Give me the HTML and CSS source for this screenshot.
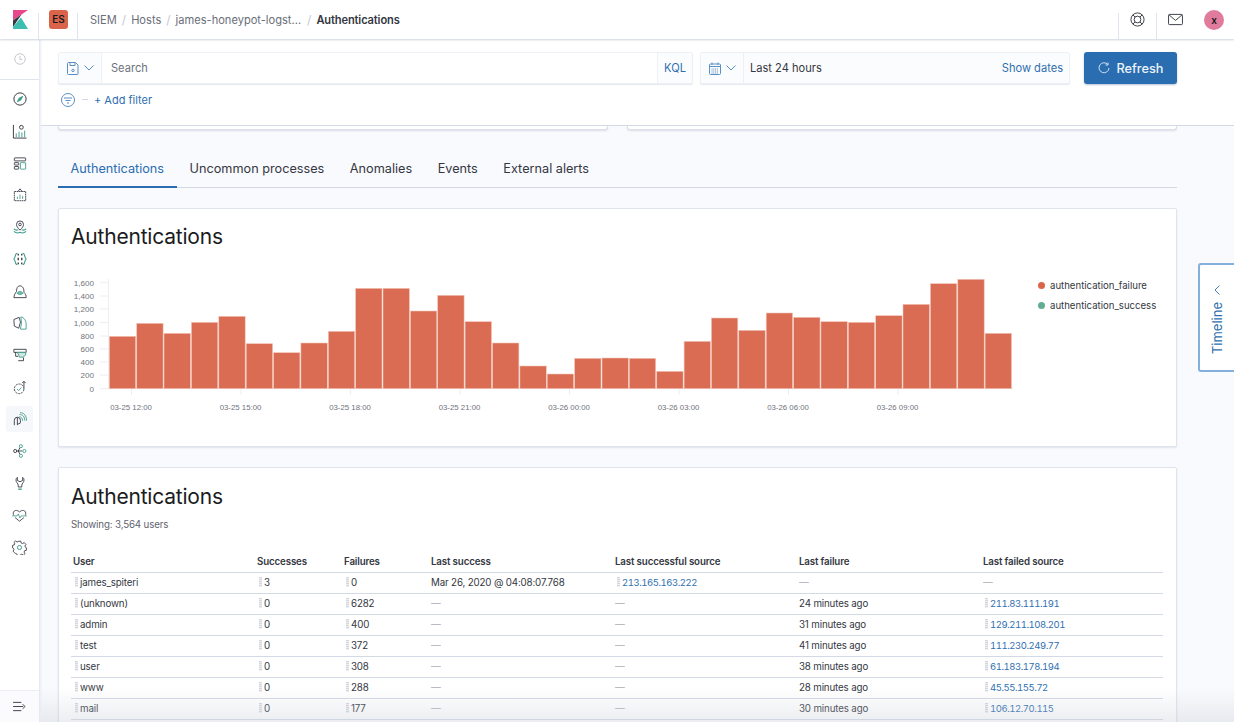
FILE: index.html
```html
<!DOCTYPE html>
<html lang="en">
<head>
<meta charset="utf-8">
<title>Authentications</title>
<link rel="stylesheet" href="styles.css">
</head>
<body>
<header class="topbar">
  <div class="logo-cell">
    <svg width="15" height="19" viewBox="0 0 15 19"><polygon points="0,0 15,0 0,10.500" fill="#e8488b"/><polygon points="0,10.500 8.500,4.500 0,17" fill="#343741"/><polygon points="0,19 15,19 8,7.500 0,17" fill="#3ebeb0"/></svg>
  </div>
  <div class="space-cell"><span class="space-badge">ES</span></div>
  <nav class="crumbs">
    <span class="crumb">SIEM</span><span class="slash">/</span>
    <span class="crumb">Hosts</span><span class="slash">/</span>
    <span class="crumb">james-honeypot-logst...</span><span class="slash slash-wide">/</span>
    <span class="crumb crumb-active">Authentications</span>
  </nav>
  <div class="top-icons">
    <div class="top-icon">
      <svg width="15" height="15" viewBox="0 0 16 16" fill="none" stroke="#343741"><circle cx="8" cy="8" r="7"/><circle cx="8" cy="8" r="3.600"/><path d="M3 3 5.400 5.400M13 3 10.600 5.400M3 13 5.400 10.600M13 13 10.600 10.600"/></svg>
    </div>
    <div class="top-icon">
      <svg width="15" height="13" viewBox="0 0 16 14" fill="none" stroke="#343741"><rect x=".5" y="1.500" width="15" height="11" rx="1"/><path d="M1 2 8 8l7-6"/></svg>
    </div>
    <div class="top-avatar"><span class="avatar">x</span></div>
  </div>
</header>

<div class="shell">
  <aside class="sidenav">
    <div class="nav-recent">
      <svg width="12" height="12" viewBox="0 0 16 16" fill="none" stroke="#c2c6cf" stroke-width="1.300"><circle cx="8" cy="8" r="7"/><path d="M8 4v4.500h3"/></svg>
    </div>
    <div class="nav-list">
      <a class="nav-item"><svg width="14" height="14" viewBox="0 0 16 16" fill="none" stroke="#343741" stroke-width="1.100"><circle cx="8" cy="8" r="7"/><path d="M11 5 9 9 5 11 7 7Z" fill="#3f9b8a" stroke="#3f9b8a"/></svg></a>
      <a class="nav-item"><svg width="15" height="15" viewBox="0 0 16 16" fill="none" stroke="#343741"><path d="M1.500 1v14h14"/><path d="M4.500 14v-4M7.500 14V8M10.500 14V9M13.500 14V7" stroke="#3f9b8a"/><circle cx="10" cy="3.500" r="2"/></svg></a>
      <a class="nav-item"><svg width="14" height="13" viewBox="0 0 16 15" fill="none" stroke="#343741"><rect x="1.500" y="1" width="13" height="3.500" rx=".5"/><rect x="1.500" y="6.500" width="5" height="2.800" rx=".5"/><rect x="1.500" y="11" width="5" height="3" rx=".5"/><rect x="8.500" y="6.500" width="6" height="7.500" rx=".5" stroke="#3f9b8a"/></svg></a>
      <a class="nav-item"><svg width="14" height="14" viewBox="0 0 16 16" fill="none" stroke="#343741"><rect x="1.500" y="4" width="13" height="10.500" stroke-dasharray="2 .6"/><path d="M8 1 5.500 4M8 1l2.500 3"/><path d="M5 12.500V10M8 12.500V7.500M11 12.500V9" stroke="#3f9b8a"/></svg></a>
      <a class="nav-item"><svg width="14" height="15" viewBox="0 0 16 17" fill="none" stroke="#343741"><path d="M8 11.500C5.500 9 4 7.200 4 5a4 4 0 0 1 8 0c0 2.200-1.500 4-4 6.500Z"/><circle cx="8" cy="5" r="1.500"/><path d="M1 10c1.500 1.600 3.300 1.800 5 1M15 10c-1.500 1.600-3.300 1.800-5 1M1 13c2.500 2 5 2 7 1 2 1 4.500 1 7-1" stroke="#3f9b8a" stroke-width="1.200"/></svg></a>
      <a class="nav-item"><svg width="14" height="14" viewBox="0 0 16 16" fill="none" stroke="#343741"><path d="M5 1.500C2.500 1.500 2.800 5 2 6.500.8 7.500.8 8.500 2 9.500c.8 1.500.5 5 3 5M11 1.500c2.500 0 2.200 3.500 3 5 1.200 1 1.200 2 0 3-.8 1.500-.5 5-3 5" stroke="#3f9b8a" stroke-width="1.200"/><path d="M6 2v2M10 2v2M6 6.500v3M10 6.500v3M6 12v2M10 12v2" stroke-width="1.500"/></svg></a>
      <a class="nav-item"><svg width="14" height="15" viewBox="0 0 16 16" fill="none" stroke="#343741"><path d="M1 15h14c.2-2.500-.8-4.500-2.500-6 .3-4-1.500-7.500-4.500-7.500S4 4.500 4 8C2.200 10 1.300 12.500 1 15Z"/><path d="M4.500 10c2.300-2.800 4.700-2.800 7 0-2.300 1.800-4.700 1.800-7 0Z" fill="#7cc0b0" stroke="#3f9b8a"/></svg></a>
      <a class="nav-item"><svg width="14" height="14" viewBox="0 0 16 16" fill="none" stroke="#343741"><path d="M1 4 7 1.500 8.500 7 6.500 14 1.500 11.500Z"/><path d="M9 1c3.500.5 6 4 6 8v6H8.500l1.200-7Z" stroke="#3f9b8a"/></svg></a>
      <a class="nav-item"><svg width="14" height="14" viewBox="0 0 16 16" fill="none" stroke="#343741"><path d="M1 1.500h14v3.500H1z"/><path d="M3 5v4.500h3"/><path d="M5 5h9.500v3l-3 2.500h-4Z" stroke="#3f9b8a" fill="#cfe6e0"/><path d="M12 11v3.500H6"/></svg></a>
      <a class="nav-item"><svg width="14" height="15" viewBox="0 0 16 16" fill="none" stroke="#343741"><circle cx="7" cy="9.500" r="5.500" stroke-dasharray="2.500 1"/><path d="M4.800 9.800 6.500 11.500 9.500 8" stroke="#3f9b8a"/><path d="M12.500 8V1M10.500 3l2-2 2 2"/></svg></a>
      <a class="nav-item nav-active"><svg width="14" height="14" viewBox="0 0 16 16" fill="none" stroke="#343741"><path d="M1.500 15V9.500a3.500 3.500 0 0 1 7 0v2a2 2 0 0 1-2 2H5"/><path d="M5 6v9"/><path d="M7 5.500c2-.3 4 1.500 4 4.500M7.500 3c3.500-.3 6 2.500 6 7M8 .8c4.500-.2 7.500 3.500 7.500 9" stroke="#3f9b8a"/></svg></a>
      <a class="nav-item"><svg width="14" height="14" viewBox="0 0 16 16" fill="none" stroke="#343741"><path d="M3.500 8h7M6 8 8 4M6 8l2 4"/><circle cx="2.500" cy="8" r="1.800"/><circle cx="9" cy="2.500" r="1.800" stroke="#3f9b8a"/><circle cx="13" cy="8" r="1.800" stroke="#3f9b8a"/><circle cx="9" cy="13.500" r="1.800" stroke="#3f9b8a"/></svg></a>
      <a class="nav-item"><svg width="14" height="15" viewBox="0 0 16 16" fill="none" stroke="#343741"><path d="M5 1C3 2 3 5.500 4.500 7c1 1 1.500 2 1.500 3.500V12h4v-1.500C10 9 10.500 8 11.500 7 13 5.500 13 2 11 1v3.500L8 6 5 4.500Z"/><path d="M6 14.500h4" stroke="#3f9b8a" stroke-width="1.500"/></svg></a>
      <a class="nav-item"><svg width="15" height="13" viewBox="0 0 18 16" fill="none" stroke="#343741"><path d="M2 8C-.5 4 3.500-1 9 3.500 14.500-1 18.500 4 16 8M3.500 10.500 9 15l5.500-4.500"/><path d="M0 8.500h6L7.500 6 9.500 11 11 8.500h7" stroke="#3f9b8a"/></svg></a>
      <a class="nav-item"><svg width="15" height="15" viewBox="0 0 16 16" fill="none" stroke="#343741"><path d="M6.500 1h3l.5 2 1.600.7L13.500 2.500l2 2.200-1.200 1.800.7 1.500 1 .5v3l-2 .5-.7 1.600 1.200 1.700-2 1.900-1.900-1.200-1.500.7-.4 1.300h-3l-.5-2-1.500-.7L2.500 14.500.5 12.500 1.700 10.700 1 9.200 0 8.700v-3l2-.5.700-1.500L1.500 2.500 3.500.7l1.800 1.200L6.200 1.500Z" transform="translate(.6 .4) scale(.92)"/><circle cx="8" cy="8" r="2.200" stroke="#3f9b8a"/></svg></a>
    </div>
    <div class="nav-foot">
      <svg width="13" height="11" viewBox="0 0 14 12" fill="none" stroke="#343741"><path d="M0 1.500h9M0 6h11M0 10.500h9M10.500 3.500 13 6l-2.500 2.500"/></svg>
    </div>
  </aside>

  <main class="main">
    <section class="querybar">
      <div class="query-row">
        <div class="search-group">
          <div class="addon addon-save">
            <svg width="12" height="13" viewBox="0 0 12 13" fill="none" stroke="#5a8fc4"><path d="M.5 1.500a1 1 0 0 1 1-1h7l2.500 2.500v8.500a1 1 0 0 1-1 1h-8.500a1 1 0 0 1-1-1Z"/><path d="M3 .5v3h5v-3"/><circle cx="6" cy="8.500" r="1.200"/></svg>
            <svg class="chev" width="10" height="6" viewBox="0 0 10 6" fill="none" stroke="#5a8fc4"><path d="m.5.500 4.500 4.500 4.500-4.500"/></svg>
          </div>
          <div class="search-input">Search</div>
          <div class="addon addon-kql">KQL</div>
        </div>
        <div class="date-group">
          <div class="addon addon-cal">
            <svg width="12" height="13" viewBox="0 0 12 13" fill="none" stroke="#5a8fc4"><rect x=".5" y="2" width="11" height="10.500" rx="1"/><path d="M.5 4.500h11M3 .5v2.500M9 .5v2.500"/><path d="M2.500 7h7M2.500 9h7M2.500 11h7" stroke-dasharray="1 .8"/></svg>
            <svg class="chev" width="10" height="6" viewBox="0 0 10 6" fill="none" stroke="#5a8fc4"><path d="m.5.500 4.500 4.500 4.500-4.500"/></svg>
          </div>
          <div class="date-text"><span>Last 24 hours</span><a class="show-dates">Show dates</a></div>
        </div>
        <button class="refresh">
          <svg width="12" height="12" viewBox="0 0 12 12" fill="none" stroke="#cfe0f0"><path d="M9.800 2.500A5 5 0 1 0 11 6"/><path d="M10 .5v2.500H7.500"/></svg>
          Refresh
        </button>
      </div>
      <div class="filter-row">
        <svg width="14" height="14" viewBox="0 0 14 14" fill="none" stroke="#5a8fc4"><circle cx="7" cy="7" r="6.500"/><path d="M3 5h8M4.500 7.500h5M6 10h2"/></svg>
        <span class="filter-dash"></span>
        <a class="add-filter">+ Add filter</a>
      </div>
    </section>

    <div class="content">
      <div class="stub-row"><div class="stub"></div><div class="stub"></div></div>

      <div class="tabs">
        <a class="tab tab-active">Authentications</a>
        <a class="tab">Uncommon processes</a>
        <a class="tab">Anomalies</a>
        <a class="tab">Events</a>
        <a class="tab">External alerts</a>
      </div>

      <section class="panel panel-chart">
        <h2 class="panel-title">Authentications</h2>
        <div class="chart-row">
          <svg class="chart" width="950" height="150" viewBox="71 270 950 150">
            <path class="axis" d="M108.500 279V389M100 282.700h8M100 296h8M100 309h8M100 322.500h8M100 336h8M100 349h8M100 362h8M100 375h8M100 388.700h913M131.500 389v6M241 389v6M350.500 389v6M460 389v6M569.500 389v6M679 389v6M788.500 389v6M898 389v6"/>
            <g class="ylabels">
              <text x="94" y="285.700">1,600</text><text x="94" y="299">1,400</text><text x="94" y="312">1,200</text><text x="94" y="325.500">1,000</text><text x="94" y="339">800</text><text x="94" y="352">600</text><text x="94" y="365">400</text><text x="94" y="378">200</text><text x="94" y="391.500">0</text>
            </g>
            <g class="bars">
              <rect x="109.300" y="336.300" width="26.400" height="52.400"/>
              <rect x="136.700" y="323.300" width="26.400" height="65.400"/>
              <rect x="164" y="333.300" width="26.400" height="55.400"/>
              <rect x="191.400" y="322.300" width="26.400" height="66.400"/>
              <rect x="218.800" y="316.300" width="26.400" height="72.400"/>
              <rect x="246.200" y="343.700" width="26.400" height="45"/>
              <rect x="273.500" y="352.700" width="26.400" height="36"/>
              <rect x="300.900" y="343" width="26.400" height="45.700"/>
              <rect x="328.300" y="331.300" width="26.400" height="57.400"/>
              <rect x="355.600" y="288.300" width="26.400" height="100.400"/>
              <rect x="383" y="288.300" width="26.400" height="100.400"/>
              <rect x="410.400" y="311" width="26.400" height="77.700"/>
              <rect x="437.700" y="295.300" width="26.400" height="93.400"/>
              <rect x="465.100" y="321.700" width="26.400" height="67"/>
              <rect x="492.500" y="343" width="26.400" height="45.700"/>
              <rect x="519.900" y="366" width="26.400" height="22.700"/>
              <rect x="547.200" y="374" width="26.400" height="14.700"/>
              <rect x="574.600" y="358.300" width="26.400" height="30.400"/>
              <rect x="602" y="358" width="26.400" height="30.700"/>
              <rect x="629.300" y="358.300" width="26.400" height="30.400"/>
              <rect x="656.700" y="371.300" width="26.400" height="17.400"/>
              <rect x="684.100" y="341.300" width="26.400" height="47.400"/>
              <rect x="711.400" y="318" width="26.400" height="70.700"/>
              <rect x="738.800" y="330.300" width="26.400" height="58.400"/>
              <rect x="766.200" y="313" width="26.400" height="75.700"/>
              <rect x="793.600" y="317.300" width="26.400" height="71.400"/>
              <rect x="820.900" y="321.700" width="26.400" height="67"/>
              <rect x="848.300" y="322.300" width="26.400" height="66.400"/>
              <rect x="875.700" y="315.700" width="26.400" height="73"/>
              <rect x="903" y="304.300" width="26.400" height="84.400"/>
              <rect x="930.400" y="283.700" width="26.400" height="105"/>
              <rect x="957.800" y="279.300" width="26.400" height="109.400"/>
              <rect x="985.100" y="333.300" width="26.400" height="55.400"/>
            </g>
            <g class="xlabels">
              <text x="131" y="410">03-25 12:00</text><text x="240.500" y="410">03-25 15:00</text><text x="350" y="410">03-25 18:00</text><text x="459.500" y="410">03-25 21:00</text><text x="569" y="410">03-26 00:00</text><text x="678.500" y="410">03-26 03:00</text><text x="788" y="410">03-26 06:00</text><text x="897.500" y="410">03-26 09:00</text>
            </g>
          </svg>
          <ul class="legend">
            <li class="legend-item"><span class="dot dot-fail"></span>authentication_failure</li>
            <li class="legend-item"><span class="dot dot-ok"></span>authentication_success</li>
          </ul>
        </div>
      </section>

      <section class="panel panel-table">
        <h2 class="panel-title">Authentications</h2>
        <p class="showing">Showing: 3,564 users</p>
        <table class="auth-table">
          <colgroup><col class="c1"><col class="c2"><col class="c3"><col class="c4"><col class="c4"><col class="c4"><col class="c7"></colgroup>
          <thead><tr><th>User</th><th>Successes</th><th>Failures</th><th>Last success</th><th>Last successful source</th><th>Last failure</th><th>Last failed source</th></tr></thead>
          <tbody>
            <tr><td><i class="grip"></i>james_spiteri</td><td><i class="grip"></i>3</td><td><i class="grip"></i>0</td><td>Mar 26, 2020 @ 04:08:07.768</td><td><i class="grip"></i><a class="link">213.165.163.222</a></td><td class="dim">—</td><td class="dim">—</td></tr>
            <tr><td><i class="grip"></i>(unknown)</td><td><i class="grip"></i>0</td><td><i class="grip"></i>6282</td><td class="dim">—</td><td class="dim">—</td><td>24 minutes ago</td><td><i class="grip"></i><a class="link">211.83.111.191</a></td></tr>
            <tr><td><i class="grip"></i>admin</td><td><i class="grip"></i>0</td><td><i class="grip"></i>400</td><td class="dim">—</td><td class="dim">—</td><td>31 minutes ago</td><td><i class="grip"></i><a class="link">129.211.108.201</a></td></tr>
            <tr><td><i class="grip"></i>test</td><td><i class="grip"></i>0</td><td><i class="grip"></i>372</td><td class="dim">—</td><td class="dim">—</td><td>41 minutes ago</td><td><i class="grip"></i><a class="link">111.230.249.77</a></td></tr>
            <tr><td><i class="grip"></i>user</td><td><i class="grip"></i>0</td><td><i class="grip"></i>308</td><td class="dim">—</td><td class="dim">—</td><td>38 minutes ago</td><td><i class="grip"></i><a class="link">61.183.178.194</a></td></tr>
            <tr><td><i class="grip"></i>www</td><td><i class="grip"></i>0</td><td><i class="grip"></i>288</td><td class="dim">—</td><td class="dim">—</td><td>28 minutes ago</td><td><i class="grip"></i><a class="link">45.55.155.72</a></td></tr>
            <tr><td><i class="grip"></i>mail</td><td><i class="grip"></i>0</td><td><i class="grip"></i>177</td><td class="dim">—</td><td class="dim">—</td><td>30 minutes ago</td><td><i class="grip"></i><a class="link">106.12.70.115</a></td></tr>
          </tbody>
        </table>
      </section>
    </div>

    <button class="timeline-tab">
      <svg width="6" height="10" viewBox="0 0 6 10" fill="none" stroke="#3f7fbf"><path d="M5.500.5 1 5l4.500 4.500"/></svg>
      <span class="timeline-label">Timeline</span>
    </button>
    <div class="bottom-fade"></div>
  </main>
</div>
</body>
</html>
```

FILE: styles.css
```css
* { box-sizing: border-box; }
html, body { height: 100%; }
body {
  margin: 0;
  overflow: hidden;
  background: #f9fafd;
  color: #343741;
  font-family: Inter, "Liberation Sans", sans-serif;
  font-size: 11.100px;
}

/* top bar */
.topbar {
  display: flex;
  align-items: stretch;
  height: 39px;
  background: #fff;
  box-shadow: 0 1px 2px #cdd3df;
  position: relative;
  z-index: 3;
}
.logo-cell, .space-cell { position: relative; width: 39px; flex: none; display: flex; align-items: center; justify-content: center; }
.logo-cell svg { margin-left: 1px; }
.logo-cell::after, .space-cell::after { content: ""; position: absolute; right: 0; top: 13px; bottom: 0; width: 1px; background: #dfe5ef; }
.space-badge {
  width: 19px; height: 19px; border-radius: 3px;
  background: #d9644a; color: #1a1c21;
  font-size: 10px; font-weight: 600; line-height: 19px; text-align: center;
}
.crumbs { display: flex; align-items: center; padding-left: 12px; flex: 1; color: #6a6e79; }
.crumb { white-space: nowrap; }
.slash { color: #c5c9d2; margin: 0 5px; font-size: 12px; }
.slash-wide { margin: 0 5px 0 6px; }
.crumb-active { color: #343741; font-weight: 600; letter-spacing: -.13px; }
.top-icons { display: flex; align-items: stretch; }
.top-icon { position: relative; width: 38px; display: flex; align-items: center; justify-content: center; }
.top-icon::before { content: ""; position: absolute; left: 0; top: 13px; bottom: 0; width: 1px; background: #dfe5ef; }
.top-avatar { width: 40px; display: flex; align-items: center; justify-content: center; }
.avatar {
  width: 20px; height: 20px; border-radius: 50%;
  background: #e07b9c; color: #1a1c21;
  font-size: 10px; font-weight: 600; line-height: 20px; text-align: center;
}

/* shell */
.shell { display: flex; height: 683px; }

/* side nav */
.sidenav {
  width: 40px; flex: none;
  display: flex; flex-direction: column;
  background: #fff;
  border-right: 1px solid #e6e9f0;
  box-shadow: 1px 0 2px #e9ecf3;
  position: relative; z-index: 2;
}
.nav-recent { height: 41px; display: flex; align-items: center; justify-content: center; border-bottom: 1px solid #dfe5ef; }
.nav-list { flex: 1; display: flex; flex-direction: column; padding-top: 3px; }
.nav-item { height: 32px; display: flex; align-items: center; justify-content: center; flex: none; }
.nav-active { background: #f5f7fa; margin: 3px 6px; height: 26px; border-radius: 3px; }
.nav-foot { height: 32px; display: flex; align-items: center; justify-content: center; border-top: 1px solid #eceff5; background: #fbfbfd; }

/* main */
.main { flex: 1; min-width: 0; position: relative; overflow: hidden; }

/* query bar */
.querybar {
  height: 87px; background: #fff;
  border-bottom: 1px solid #d3dae6;
  padding: 13px 57px 0 18px;
}
.query-row { display: flex; align-items: flex-start; height: 32px; }
.search-group, .date-group {
  display: flex; height: 32px;
  background: #fbfcfd;
  border: 1px solid #eef0f5;
  box-shadow: 0 1px 1px #e4e8f0;
  border-radius: 2px;
}
.search-group { width: 635px; }
.date-group { width: 370px; margin-left: 7px; }
.addon { display: flex; align-items: center; justify-content: center; flex: none; background: #fbfcfd; }
.addon-save { width: 43px; gap: 5px; border-right: 1px solid #eef0f5; }
.addon-cal { width: 43px; gap: 5px; border-right: 1px solid #eef0f5; }
.addon-kql { width: 35px; color: #2f6fb0; border-left: 1px solid #eef0f5; }
.search-input { flex: 1; display: flex; align-items: center; padding-left: 9px; background: #fff; color: #6e727c; }
.date-text { flex: 1; display: flex; align-items: center; justify-content: space-between; padding: 0 6px 0 6px; }
.show-dates { color: #2f6fb0; }
.refresh {
  width: 93px; height: 32px; margin-left: 14px;
  display: flex; align-items: center; justify-content: center; gap: 7px;
  background: #2a6db0; color: #eef4fa;
  border: 0; border-radius: 3px;
  box-shadow: 0 1px 2px #b5c4d8;
  font: 500 12.700px Inter, "Liberation Sans", sans-serif;
}
.filter-row { display: flex; align-items: center; height: 17px; margin-top: 7px; padding-left: 3px; }
.filter-dash { width: 6px; height: 1px; background: #d3dae6; margin: 0 6px 0 7px; }
.add-filter { color: #2f6fb0; font-size: 11px; }

/* content */
.content { padding: 0 57px 0 18px; }
.stub-row { display: flex; justify-content: space-between; }
.stub { width: 550px; height: 4px; background: #fff; border: 1px solid #dbe0ea; border-top: 0; border-radius: 0 0 3px 3px; box-shadow: 0 1px 2px #d8dde8; }
.tabs { display: flex; height: 38px; margin-top: 20px; border-bottom: 1px solid #d3dae6; font-size: 12.700px; color: #343741; }
.tab { padding: 0 13px 0 12.500px; line-height: 37px; height: 38px; white-space: nowrap; }
.tab-active { color: #2a6db0; border-bottom: 2px solid #2a6db0; }

.panel { background: #fff; border: 1px solid #e0e4ec; border-radius: 2px; box-shadow: 0 1px 2px #dfe3ec; margin-top: 20px; padding: 0 12px; }
.panel-title { margin: 0; font-size: 21px; font-weight: 400; color: #1a1c21; line-height: 28px; letter-spacing: -.2px; }
.panel-chart { height: 239px; }
.panel-chart .panel-title { padding-top: 14px; height: 61px; line-height: 28px; }
.chart-row { display: flex; }
.chart { display: block; flex: none; }
.axis { fill: none; stroke: #eceef2; stroke-width: 1; }
.ylabels text { font: 8.100px "Liberation Sans", sans-serif; fill: #6f737c; text-anchor: end; }
.xlabels text { font: 7.800px "Liberation Sans", sans-serif; fill: #6f737c; text-anchor: middle; }
.bars rect { fill: #d96c53; stroke: #f3c6ba; stroke-width: .6; }

.legend { list-style: none; margin: 0 0 0 16.500px; padding: 5px 0 0; font-size: 9.600px; color: #343741; }
.legend-item { display: flex; align-items: center; gap: 5.500px; height: 20px; white-space: nowrap; }
.dot { width: 7px; height: 7px; border-radius: 50%; }
.dot-fail { background: #d9654a; }
.dot-ok { background: #62ad92; }

.panel-table { height: 300px; }
.panel-table .panel-title { padding-top: 15px; height: 44px; }
.showing { margin: 5px 0 0; font-size: 9.750px; letter-spacing: -.15px; color: #5f636d; line-height: 16px; }
.auth-table { table-layout: fixed; width: 1092px; border-collapse: collapse; margin-top: 18px; font-size: 9.750px; letter-spacing: -.15px; }
.c1 { width: 184px; }
.c2, .c3 { width: 87px; }
.c4 { width: 184px; }
.c7 { width: 182px; }
.auth-table th { height: 21px; padding: 0 2px; text-align: left; font-weight: 600; color: #343741; border-bottom: 1px solid #d3dae6; white-space: nowrap; }
.auth-table td { height: 21px; padding: 0 2px; color: #343741; border-bottom: 1px solid #d3dae6; white-space: nowrap; }
.auth-table .dim { color: #a9adb6; }
.grip { display: inline-block; width: 3px; height: 10px; margin: 0 2px 0 2px; vertical-align: -1px; background: repeating-linear-gradient(#d3d6dc 0 1px, #eceef1 1px 2px); }
.link { color: #2f6fb0; font-size: 9.500px; font-variant-numeric: tabular-nums; letter-spacing: -.44px; }

/* timeline flyout */
.timeline-tab {
  position: absolute; top: 224px; right: 0;
  width: 36px; height: 109px; padding: 0;
  display: flex; flex-direction: column; align-items: center; gap: 7px;
  background: #fff;
  border: 2px solid #85afdc; border-right: 0;
  border-radius: 3px 0 0 3px;
  padding-top: 20px;
}
.timeline-label { writing-mode: vertical-rl; transform: rotate(180deg); font: 400 13px Inter, "Liberation Sans", sans-serif; color: #2f6fb0; }

.bottom-fade { position: absolute; left: 0; right: 0; bottom: 0; height: 34px; background: linear-gradient(rgba(200,205,215,0), rgba(200,205,215,.35)); pointer-events: none; }
```
